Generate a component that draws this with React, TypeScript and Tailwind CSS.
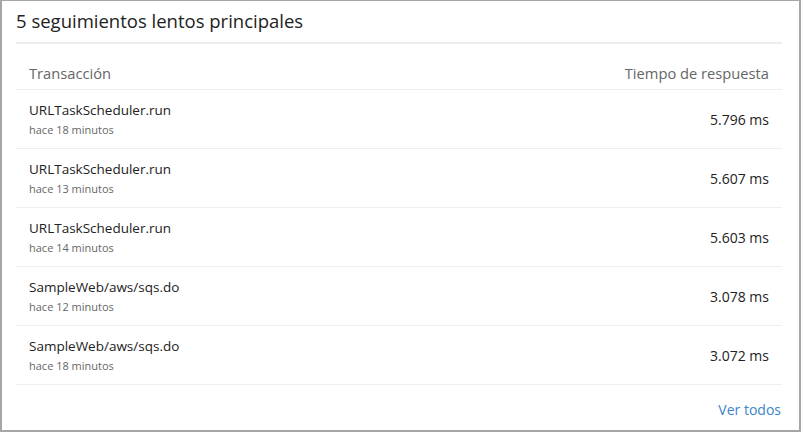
import React from 'react';

const rows = [
  { name: 'URLTaskScheduler.run', ago: 'hace 18 minutos', time: '5.796 ms' },
  { name: 'URLTaskScheduler.run', ago: 'hace 13 minutos', time: '5.607 ms' },
  { name: 'URLTaskScheduler.run', ago: 'hace 14 minutos', time: '5.603 ms' },
  { name: 'SampleWeb/aws/sqs.do', ago: 'hace 12 minutos', time: '3.078 ms' },
  { name: 'SampleWeb/aws/sqs.do', ago: 'hace 18 minutos', time: '3.072 ms' },
];

const App: React.FC = () => {
  return (
    <div className="w-[801px] h-[432px] bg-white font-['Open_Sans',_sans-serif]">
      <div className="w-full h-full flex flex-col border-t border-b-2 border-l-2 border-r-2 border-[#a6a6a6]">
        <div className="mx-[14px] mr-[17px] h-[43px] flex items-center border-b-2 border-[#ececec]">
          <h2 className="text-[18.5px] text-[#222] leading-none">5 seguimientos lentos principales</h2>
        </div>

        <div className="mx-[14px] mr-[17px]">
          <div className="h-[46px] flex items-center justify-between px-[13px] border-b border-[#efefef] text-[14.7px] text-[#666]">
            <span className="pt-[13px]">Transacción</span>
            <span className="pt-[13px]">Tiempo de respuesta</span>
          </div>
          {rows.map((r, i) => (
            <div
              key={i}
              className="h-[59px] flex items-center justify-between px-[13px] border-b border-[#efefef]"
            >
              <div className="flex flex-col">
                <span className="text-[13.5px] text-[#222] leading-[20px] -mt-[1px]">{r.name}</span>
                <span className="text-[11px] text-[#666] leading-[16px] mt-[2px]">{r.ago}</span>
              </div>
              <span className="text-[14px] text-[#222]">{r.time}</span>
            </div>
          ))}
        </div>

        <div className="mx-[14px] mr-[18px] flex justify-end pt-[14px]">
          <a className="text-[14px] text-[#3c85c8]">Ver todos</a>
        </div>
      </div>
    </div>
  );
};

export default App;
